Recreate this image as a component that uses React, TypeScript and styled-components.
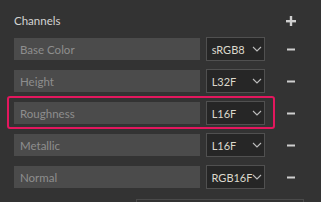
import React from "react";
import styled, { createGlobalStyle, css } from "styled-components";

const Global = createGlobalStyle`
  html, body { margin: 0; padding: 0; background: #333333; }
  body { font-family: Lato, "Noto Sans", sans-serif; }
`;

const Panel = styled.div`
  width: 321px;
  height: 202px;
  overflow: hidden;
  box-sizing: border-box;
  padding: 9px 20px 0 14px;
  background: #333333;
`;

const Header = styled.div`
  display: flex;
  align-items: center;
  justify-content: space-between;
  height: 24px;
  margin-bottom: 4px;
`;

const Title = styled.span`
  font-size: 11.5px;
  color: #d4d4d4;
  line-height: 1;
`;

const IconButton = styled.button`
  width: 20px;
  height: 20px;
  padding: 0;
  border: 0;
  background: transparent;
  display: flex;
  align-items: center;
  justify-content: center;
  color: #cfcfcf;
`;

const Rows = styled.div`
  display: flex;
  flex-direction: column;
  gap: 8px;
`;

const Row = styled.div<{ $highlight?: boolean }>`
  position: relative;
  display: flex;
  align-items: center;
  height: 24px;
  gap: 6px;
  ${(p) =>
    p.$highlight &&
    css`
      &::after {
        content: "";
        position: absolute;
        left: -7px;
        top: -5px;
        width: 268px;
        height: 33px;
        box-sizing: border-box;
        border: 2px solid #e3175e;
        border-radius: 3px;
        pointer-events: none;
      }
    `}
`;

const NameField = styled.div`
  width: 190px;
  height: 22px;
  box-sizing: border-box;
  padding-left: 6px;
  display: flex;
  align-items: center;
  background: #4b4b4b;
  color: #8e8e8e;
  font-size: 11.5px;
`;

const Select = styled.div`
  width: 61px;
  height: 24px;
  box-sizing: border-box;
  border: 1px solid #505050;
  background: #262626;
  display: flex;
  align-items: center;
  justify-content: space-between;
  padding: 0 2px 0 5px;
  color: #dcd8cc;
  font-size: 11px;
  white-space: nowrap;

  svg {
    flex-shrink: 0;
  }
`;

const MinusSlot = styled.div`
  margin-left: 10px;
  width: 20px;
  display: flex;
  justify-content: center;
`;

const Chevron = () => (
  <svg width="10" height="6" viewBox="0 0 10 6">
    <path d="M1 1 L5 5 L9 1" fill="none" stroke="#bdbdbd" strokeWidth="1.1" />
  </svg>
);

const Minus = () => (
  <svg width="8" height="3" viewBox="0 0 8 3">
    <rect x="0" y="0.5" width="8" height="2" fill="#cfcfcf" />
  </svg>
);

const Plus = () => (
  <svg width="10" height="10" viewBox="0 0 10 10">
    <rect x="0" y="4" width="10" height="2.4" fill="#cfcfcf" />
    <rect x="3.8" y="0" width="2.4" height="10" fill="#cfcfcf" />
  </svg>
);

const Footer = styled.div`
  margin-top: 10px;
  margin-left: 122px;
  width: 168px;
  height: 20px;
  box-sizing: border-box;
  border: 1px solid #4a4a4a;
`;

const channels = [
  { name: "Base Color", format: "sRGB8" },
  { name: "Height", format: "L32F" },
  { name: "Roughness", format: "L16F", highlight: true },
  { name: "Metallic", format: "L16F" },
  { name: "Normal", format: "RGB16F" },
];

export default function App() {
  return (
    <Panel>
      <Global />
      <Header>
        <Title>Channels</Title>
        <IconButton aria-label="Add channel">
          <Plus />
        </IconButton>
      </Header>
      <Rows>
        {channels.map((c) => (
          <Row key={c.name} $highlight={c.highlight}>
            <NameField>{c.name}</NameField>
            <Select>
              <span>{c.format}</span>
              <Chevron />
            </Select>
            <MinusSlot>
              <Minus />
            </MinusSlot>
          </Row>
        ))}
      </Rows>
      <Footer />
    </Panel>
  );
}
